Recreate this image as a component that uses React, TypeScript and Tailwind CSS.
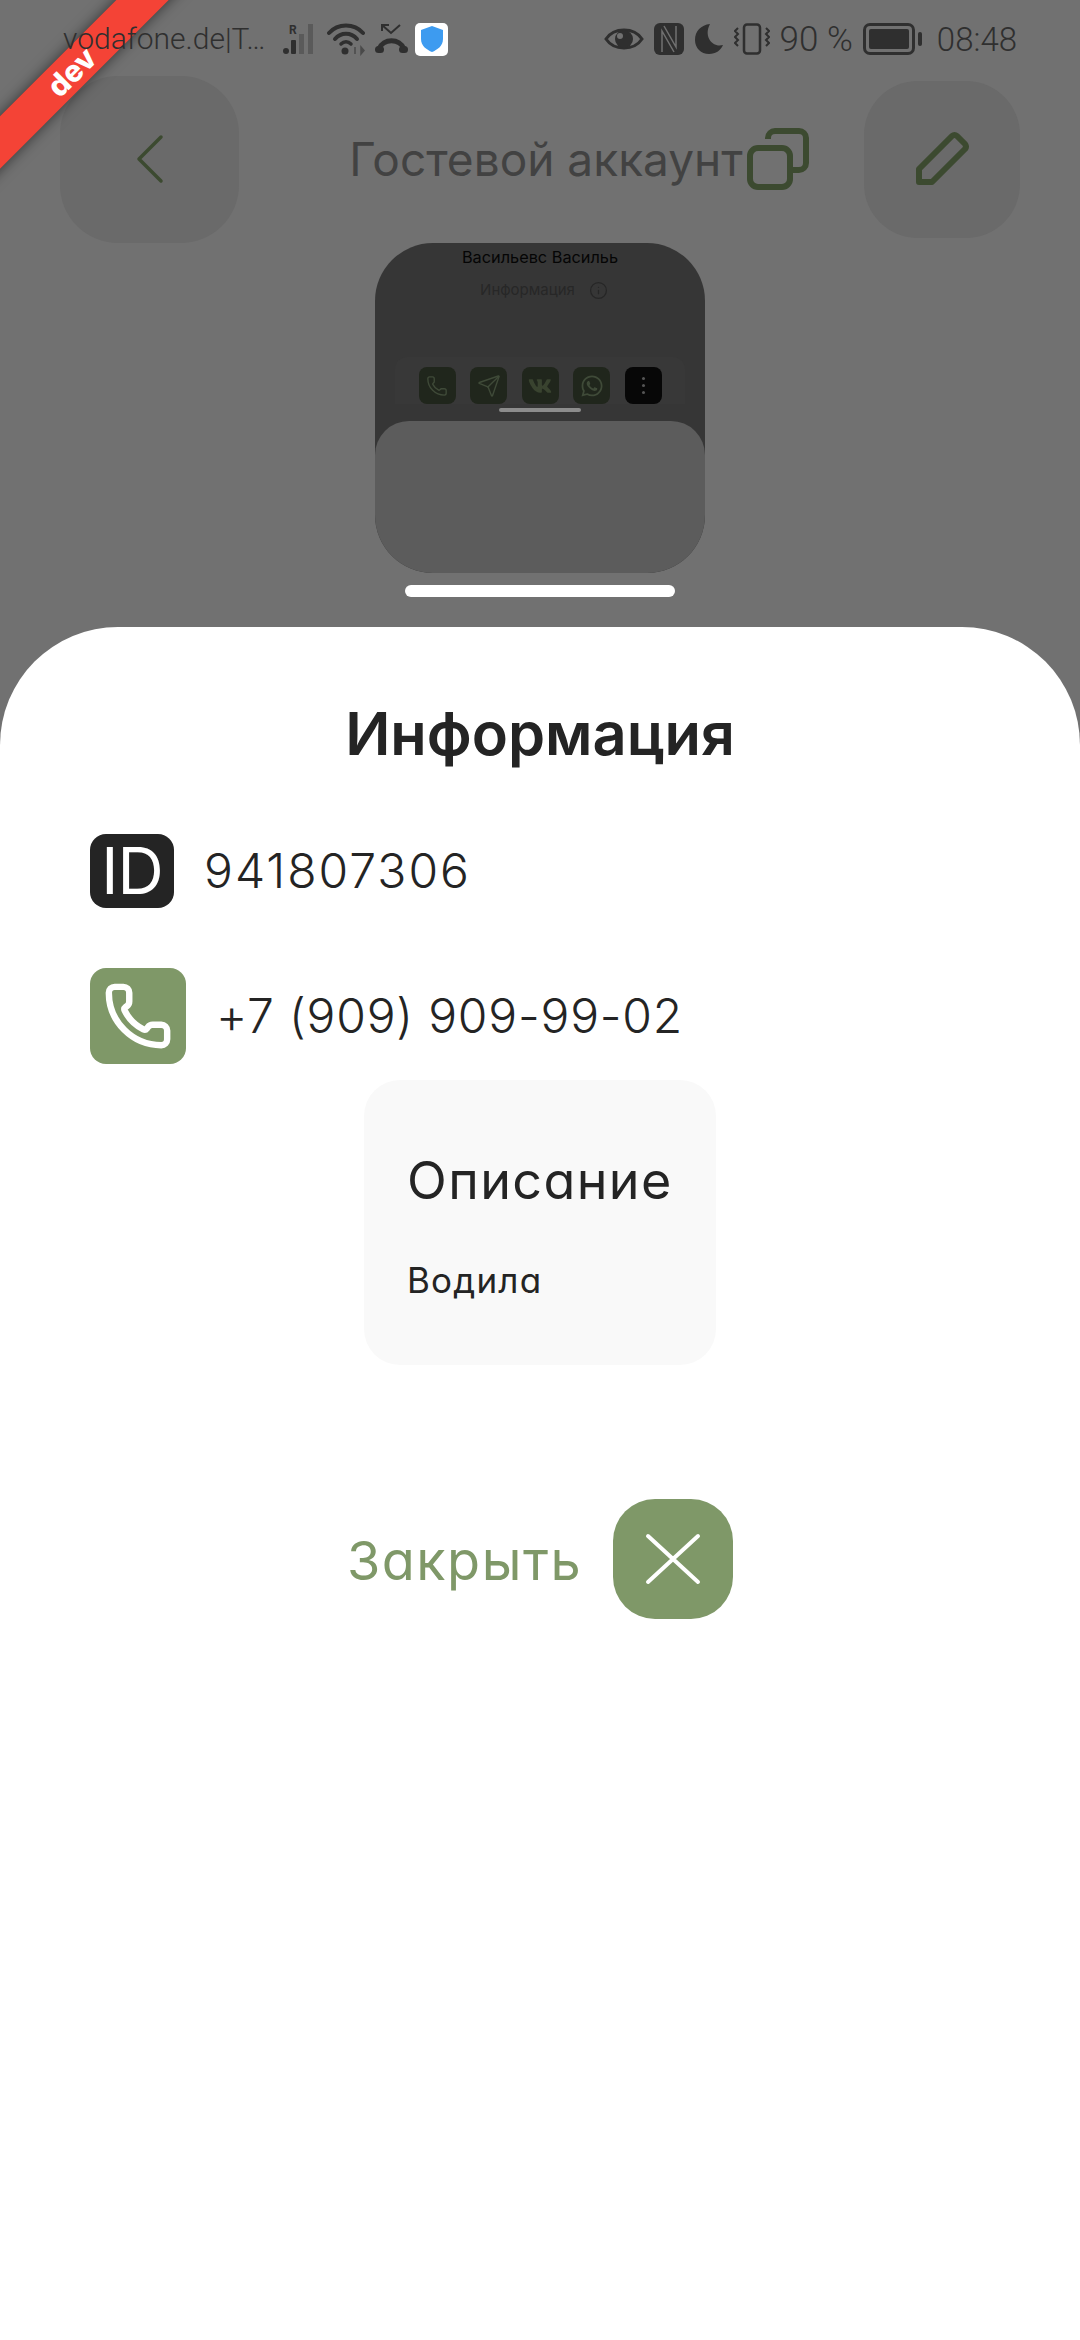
import React from "react";
import { Phone, Send, Info } from "lucide-react";
import { FaVk, FaWhatsapp } from "react-icons/fa";

const Signal = () => (
  <svg width="34" height="34" viewBox="0 0 34 34" className="shrink-0">
    <text x="6" y="12" fontSize="12" fontWeight="700" fill="#2f2f2f" fontFamily="Roboto, sans-serif">R</text>
    <circle cx="3" cy="29" r="3" fill="#2f2f2f" />
    <rect x="8" y="18" width="5" height="14" rx="1" fill="#2f2f2f" />
    <rect x="16" y="12" width="5" height="20" fill="#5a5a5a" />
    <rect x="25" y="2" width="5" height="30" fill="#5a5a5a" />
  </svg>
);
const Wifi = () => (
  <svg width="38" height="34" viewBox="0 0 38 34" fill="none" className="shrink-0">
    <path d="M2 11C11 1 27 1 36 11" stroke="#2f2f2f" strokeWidth="4" strokeLinecap="round" />
    <path d="M8 17C14 10 24 10 30 17" stroke="#2f2f2f" strokeWidth="4" strokeLinecap="round" />
    <path d="M14 22C17 19 21 19 24 22" stroke="#2f2f2f" strokeWidth="3.5" strokeLinecap="round" />
    <circle cx="18" cy="29" r="3.5" fill="#2f2f2f" />
    <path d="M28 25v7M34 25l3 3.5-3 3.5z" stroke="#4a4a4a" strokeWidth="1.5" fill="#4a4a4a" />
  </svg>
);
const Missed = () => (
  <svg width="33" height="34" viewBox="0 0 33 34" fill="none" className="shrink-0">
    <path d="M7 9V3h7M7 3l9 8 9-8" stroke="#2f2f2f" strokeWidth="2" />
    <path d="M4 27C8 16 25 16 29 27" stroke="#2f2f2f" strokeWidth="5" strokeLinecap="round" />
    <rect x="0" y="24" width="9" height="7" rx="3.5" fill="#2f2f2f" />
    <rect x="24" y="24" width="9" height="7" rx="3.5" fill="#2f2f2f" />
  </svg>
);
const Shield = () => (
  <div className="w-[33px] h-[33px] rounded-[5px] bg-white flex items-center justify-center shrink-0">
    <svg width="24" height="28" viewBox="0 0 24 28">
      <path d="M12 1l11 4v9c0 7-6 11-11 13C7 25 1 21 1 14V5z" fill="#3d9bf0" />
    </svg>
  </div>
);
const Eye = () => (
  <svg width="40" height="28" viewBox="0 0 40 28" fill="none" className="shrink-0">
    <path d="M2 14C10 2 30 2 38 14C30 26 10 26 2 14Z" stroke="#2f2f2f" strokeWidth="3" />
    <circle cx="20" cy="14" r="9" fill="#2f2f2f" />
    <circle cx="16" cy="11" r="3" fill="#717171" />
  </svg>
);
const Nfc = () => (
  <svg width="30" height="32" viewBox="0 0 30 32" fill="none" className="shrink-0">
    <rect width="30" height="32" rx="6" fill="#2f2f2f" />
    <path d="M8 29V8L20 29M10 3L22 24V3" stroke="#717171" strokeWidth="1.5" />
  </svg>
);
const Moon = () => (
  <svg width="30" height="32" viewBox="0 0 30 32" className="shrink-0">
    <path d="M16 1C7 2 1 8 1 17c0 8 6 14 14 14 7 0 12-4 14-9-10 3-20-8-13-21z" fill="#2f2f2f" />
  </svg>
);
const Vibrate = () => (
  <svg width="36" height="32" viewBox="0 0 36 32" fill="none" className="shrink-0">
    <rect x="10" y="1.5" width="16" height="29" rx="3" stroke="#2f2f2f" strokeWidth="2.5" />
    <path d="M4 5l-3 3 3 3-3 3 3 3-3 3 3 3M32 5l3 3-3 3 3 3-3 3 3 3-3 3" stroke="#2f2f2f" strokeWidth="2" />
  </svg>
);
const Battery = () => (
  <div className="flex items-center gap-[3px] shrink-0">
    <div className="w-[52px] h-[32px] rounded-[7px] border-[3px] border-[#2f2f2f] p-[3px]">
      <div className="w-full h-full bg-[#2f2f2f] rounded-[2px]" />
    </div>
    <div className="w-[4px] h-[14px] rounded-full bg-[#2f2f2f]" />
  </div>
);

const MiniSquare = ({ dark, children }: { dark?: boolean; children: React.ReactNode }) => (
  <div className={dark ? "w-[37px] h-[37px] rounded-[8px] bg-[#070707] flex items-center justify-center" : "w-[37px] h-[37px] rounded-[8px] bg-[#20261c] flex items-center justify-center"}>
    {children}
  </div>
);

export default function App() {
  return (
    <div className="relative w-[1080px] h-[2340px] overflow-hidden bg-white flex flex-col font-['Inter',sans-serif]">
      <div className="absolute left-[-79px] top-[53px] w-[300px] h-[37px] -rotate-45 bg-[#f44336] shadow-[0_0_14px_rgba(0,0,0,0.55)] z-10 flex items-center justify-center">
        <span className="text-white text-[30px] leading-none font-extrabold font-['Inter',sans-serif]">dev</span>
      </div>

      <section className="h-[627px] shrink-0 bg-[#717171] flex flex-col">
        <div className="relative z-20 h-[75px] shrink-0 flex items-center pl-[63px] pr-[63px] pt-[3px]">
          <span className="w-[205px] text-[30px] leading-none text-[#2f2f2f] font-light font-['Roboto',sans-serif] whitespace-nowrap">vodafone.de|T…</span>
          <div className="ml-[15px] flex items-center gap-[10px]">
            <Signal />
            <Wifi />
            <Missed />
            <div className="-ml-[3px]">
              <Shield />
            </div>
          </div>
          <div className="ml-auto flex items-center gap-[10px]">
            <Eye />
            <Nfc />
            <Moon />
            <Vibrate />
            <span className="text-[35px] leading-none text-[#2f2f2f] font-light font-['Roboto',sans-serif] whitespace-nowrap">90 %</span>
            <Battery />
            <span className="ml-[5px] text-[33px] leading-none text-[#2f2f2f] font-light font-['Roboto',sans-serif]">08:48</span>
          </div>
        </div>

        <div className="h-[168px] shrink-0 flex items-center pl-[60px] pr-[60px]">
          <div className="w-[179px] h-[167px] rounded-[58px] bg-[#6a6a6a] flex items-center justify-center">
            <svg width="30" height="52" viewBox="0 0 30 52" fill="none">
              <path d="M26 4L4 26L26 48" stroke="#3c4a30" strokeWidth="3.5" strokeLinecap="round" strokeLinejoin="round" />
            </svg>
          </div>
          <div className="flex-1 flex items-center justify-center pl-[55px]">
            <span className="text-[46px] leading-none text-[#424242] font-normal whitespace-nowrap">Гостевой аккаунт</span>
            <svg width="62" height="62" viewBox="0 0 62 62" fill="none" className="ml-[4px] shrink-0">
              <rect x="3" y="20" width="40" height="39" rx="8" stroke="#3c4a30" strokeWidth="6" />
              <path d="M21 11V10a7 7 0 0 1 7-7h24a7 7 0 0 1 7 7v25a7 7 0 0 1-7 7h-9" stroke="#3c4a30" strokeWidth="6" />
            </svg>
          </div>
          <div className="w-[156px] h-[157px] rounded-[54px] bg-[#6a6a6a] flex items-center justify-center">
            <svg width="56" height="56" viewBox="0 0 56 56" fill="none">
              <path d="M5 51V38L38 5a4 4 0 0 1 5 0l8 8a4 4 0 0 1 0 5L18 51Z" stroke="#3c4a30" strokeWidth="6" strokeLinejoin="round" />
            </svg>
          </div>
        </div>

        <div className="flex justify-center">
          <div className="w-[330px] h-[330px] rounded-[58px] bg-[#363636] overflow-hidden flex flex-col items-center">
            <span className="mt-[4px] text-[16.3px] leading-[20px] text-[#050505] font-normal whitespace-nowrap">Васильевс Васильь</span>
            <div className="mt-[13px] ml-[8px] flex items-center gap-[14px]">
              <span className="text-[15px] leading-[20px] text-[#272727]">Информация</span>
              <Info size={19} color="#262626" strokeWidth={1.6} />
            </div>
            <div className="mt-[57px] w-[290px] pt-[10px] rounded-t-[12px] bg-[#383838] flex justify-center gap-[14.5px]">
              <MiniSquare><Phone size={22} color="#3f4a38" strokeWidth={1.5} /></MiniSquare>
              <MiniSquare><Send size={24} color="#3f4a38" strokeWidth={1.4} /></MiniSquare>
              <MiniSquare><FaVk size={24} color="#39432f" /></MiniSquare>
              <MiniSquare><FaWhatsapp size={24} color="#3f4a38" /></MiniSquare>
              <MiniSquare dark>
                <div className="flex flex-col gap-[4px]">
                  <div className="w-[3px] h-[3px] rounded-full bg-[#555555]" />
                  <div className="w-[3px] h-[3px] rounded-full bg-[#555555]" />
                  <div className="w-[3px] h-[3px] rounded-full bg-[#555555]" />
                </div>
              </MiniSquare>
            </div>
            <div className="mt-[4px] w-[82px] h-[4px] rounded-full bg-[#8c8c8c]" />
            <div className="mt-[9px] w-full flex-1 rounded-t-[34px] bg-[#5c5c5c]" />
          </div>
        </div>

        <div className="mt-[12px] mx-auto w-[270px] h-[12px] rounded-full bg-white" />
      </section>

      <section className="flex-1 bg-[#717171]">
        <div className="h-full rounded-t-[118px] bg-white flex flex-col items-center">
          <h1 className="mt-[71px] text-[59.5px] leading-[70px] font-semibold text-[#242424] whitespace-nowrap">Информация</h1>

          <div className="mt-[66px] self-start pl-[90px] flex items-center">
            <div className="w-[84px] h-[74px] rounded-[16px] bg-[#242424] flex items-center justify-center text-white text-[64px] leading-none font-normal tracking-[-1px]">ID</div>
            <span className="ml-[30px] text-[48px] leading-none text-[#242424] font-light tracking-[2px]">941807306</span>
          </div>

          <div className="mt-[60px] self-start pl-[90px] flex items-center">
            <div className="w-[96px] h-[96px] rounded-[16px] bg-[#7f9868] flex items-center justify-center">
              <Phone size={70} color="#ffffff" strokeWidth={2.2} />
            </div>
            <span className="ml-[30px] text-[48px] leading-none text-[#242424] font-light tracking-[0.8px]">+7 (909) 909-99-02</span>
          </div>

          <div className="mt-[16px] w-[352px] h-[285px] rounded-[36px] bg-[#f9f9f9] pl-[43px] flex flex-col">
            <span className="mt-[75px] text-[52px] leading-none text-[#242424] font-normal tracking-[1.4px] [font-feature-settings:'cv11'] whitespace-nowrap">Описание</span>
            <span className="mt-[56px] text-[35px] leading-none text-[#242424] font-normal tracking-[1.2px] [font-feature-settings:'cv11']">Водила</span>
          </div>

          <div className="mt-[134px] flex items-center gap-[31px]">
            <span className="pt-[4px] text-[54px] leading-none text-[#7f9868] font-normal tracking-[1.5px] [font-feature-settings:'cv11']">Закрыть</span>
            <div className="w-[120px] h-[120px] rounded-[42px] bg-[#7f9868] flex items-center justify-center">
              <svg width="56" height="52" viewBox="0 0 56 52" fill="none">
                <path d="M3 3L53 49M53 3L3 49" stroke="#ffffff" strokeWidth="4" strokeLinecap="round" />
              </svg>
            </div>
          </div>
        </div>
      </section>
    </div>
  );
}
